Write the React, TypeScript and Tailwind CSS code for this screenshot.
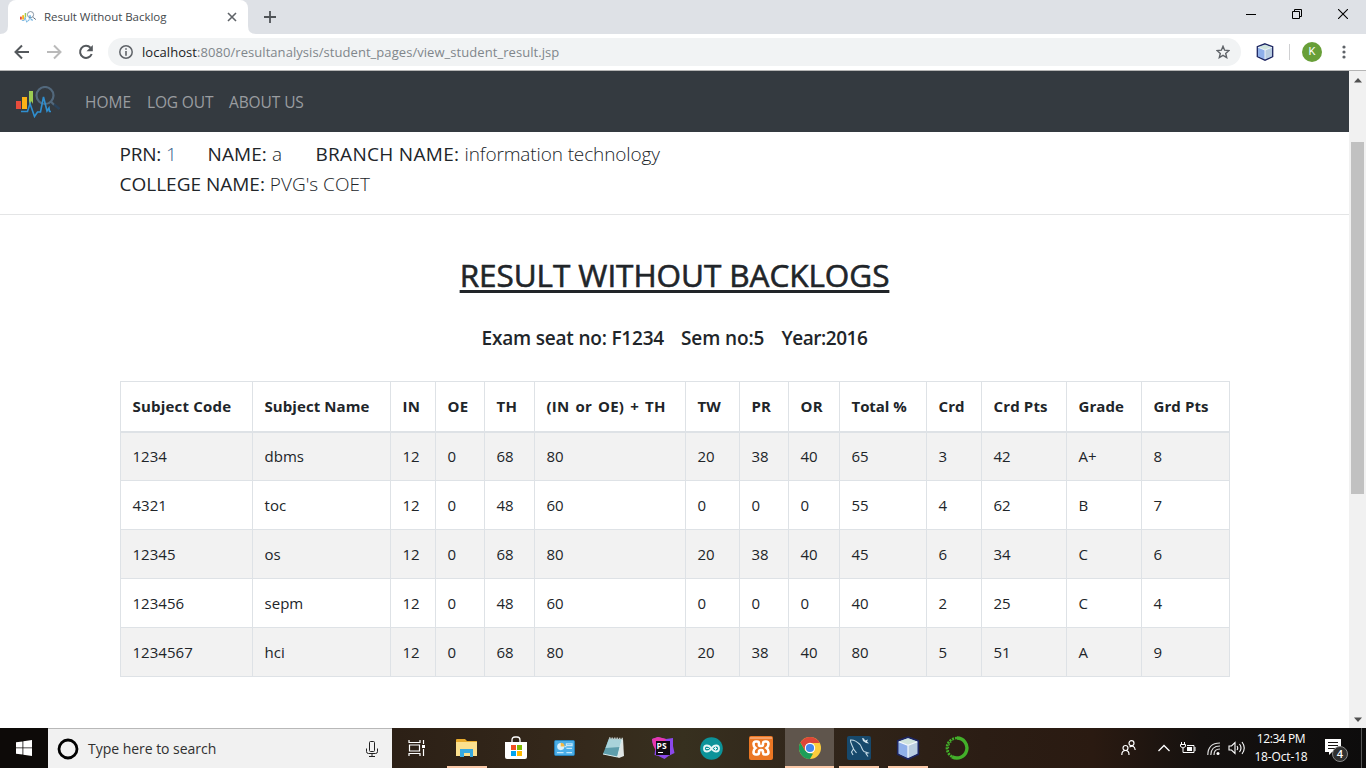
import React from "react";

const SEGOE = "font-['Open_Sans','Noto_Sans',sans-serif]";

const columns: { label: string; w: string; ls: string }[] = [
  { label: "Subject Code", w: "w-[132px]", ls: "tracking-[0.2px]" },
  { label: "Subject Name", w: "w-[138px]", ls: "tracking-[0.08px]" },
  { label: "IN", w: "w-[45px]", ls: "tracking-[0.2px]" },
  { label: "OE", w: "w-[49px]", ls: "tracking-[0.2px]" },
  { label: "TH", w: "w-[50px]", ls: "tracking-[0.2px]" },
  { label: "(IN or OE) + TH", w: "w-[151px]", ls: "tracking-[0.2px] [word-spacing:2px]" },
  { label: "TW", w: "w-[54px]", ls: "tracking-[0.1px]" },
  { label: "PR", w: "w-[49px]", ls: "tracking-[0.2px]" },
  { label: "OR", w: "w-[51px]", ls: "tracking-[0.2px]" },
  { label: "Total %", w: "w-[87px]", ls: "tracking-[-0.05px]" },
  { label: "Crd", w: "w-[55px]", ls: "tracking-[0.1px]" },
  { label: "Crd Pts", w: "w-[85px]", ls: "tracking-[0.15px]" },
  { label: "Grade", w: "w-[75px]", ls: "tracking-[0.05px]" },
  { label: "Grd Pts", w: "w-[88px]", ls: "tracking-[0.1px]" },
];

const rows = [
  ["1234", "dbms", "12", "0", "68", "80", "20", "38", "40", "65", "3", "42", "A+", "8"],
  ["4321", "toc", "12", "0", "48", "60", "0", "0", "0", "55", "4", "62", "B", "7"],
  ["12345", "os", "12", "0", "68", "80", "20", "38", "40", "45", "6", "34", "C", "6"],
  ["123456", "sepm", "12", "0", "48", "60", "0", "0", "0", "40", "2", "25", "C", "4"],
  ["1234567", "hci", "12", "0", "68", "80", "20", "38", "40", "80", "5", "51", "A", "9"],
];

function Logo({ className, ring, handle }: { className: string; ring: string; handle: string }) {
  return (
    <svg className={className} viewBox="0 0 44 32" fill="none">
      <rect x="0" y="15" width="5" height="8" fill="#e74c3c" />
      <rect x="6" y="11" width="5" height="12" fill="#fbb117" />
      <path d="M13 5h4v13l-1.500-3-1.500 5h-1z" fill="#9ccc52" />
      <circle cx="29" cy="9.500" r="8.500" stroke={ring} strokeWidth="2.200" />
      <path d="M34.800 15.500l3.500 3.500" stroke={ring} strokeWidth="2.200" />
      <path d="M38 18.500l5.500 4.500" stroke={handle} strokeWidth="2.500" />
      <path d="M5 25.500h6.500l2.500-8 4.500 13 3-4.500h3l3-15 3.500 14 2-3 .5 3.500h1.500" stroke="#2f8fd0" strokeWidth="1.600" />
    </svg>
  );
}

function Cube({ className }: { className: string }) {
  return (
    <svg className={className} viewBox="0 0 18 18">
      <path d="M9 .8l7.700 2.900v10L9 17.200l-7.700-3.500v-10z" fill="#a9c4ea" stroke="#1d2560" strokeWidth="1.300" />
      <path d="M9 1.700L15.900 4.200 9 6.900 2.100 4.200z" fill="#cfe3dc" />
      <path d="M2.100 4.400L9 7v9.300l-6.900-3.100z" fill="#8fb0ea" />
      <path d="M15.900 4.400L9 7v9.300l6.900-3.100z" fill="#b9cde0" />
      <path d="M9 7v9.200M2.100 4.300L9 7l6.900-2.700" fill="none" stroke="#f4f8fc" strokeWidth=".9" />
    </svg>
  );
}

function TabStrip() {
  return (
    <div className="relative flex h-[34px] shrink-0 bg-[#dee1e6]">
      <svg className="h-[34px] w-2 shrink-0" viewBox="0 0 8 34">
        <path d="M8 26v8H0q8 0 8-8z" fill="#fff" />
      </svg>
      <div className="flex w-[240px] items-center rounded-t-lg bg-white pl-3">
        <Logo className="h-[14px] w-4" ring="#6d7f90" handle="#44586c" />
        <span className="ml-2 w-[175px] whitespace-nowrap text-[11.500px] tracking-[-0.04px] text-[#45494d]">Result Without Backlog</span>
        <svg className="ml-[7px] h-3 w-3 shrink-0" viewBox="0 0 12 12" stroke="#5f6368" strokeWidth="1.600">
          <path d="M2 2l8 8M10 2l-8 8" />
        </svg>
      </div>
      <svg className="h-[34px] w-2 shrink-0" viewBox="0 0 8 34">
        <path d="M0 26v8h8q-8 0-8-8z" fill="#fff" />
      </svg>
      <svg className="ml-2 mt-[11px] h-3 w-3" viewBox="0 0 12 12" stroke="#4f5357" strokeWidth="1.800">
        <path d="M6 0v12M0 6h12" />
      </svg>
      <div className="ml-auto mt-[9px] flex h-[10px] items-center gap-9 pr-[18px]">
        <svg className="h-[10px] w-[10px]" viewBox="0 0 10 10"><path d="M0 5.500h10" stroke="#000" /></svg>
        <svg className="h-[10px] w-[10px]" viewBox="0 0 10 10" fill="none" stroke="#000"><path d="M.5 2.500h7v7h-7zM2.500 2V.5h7v7H8" /></svg>
        <svg className="h-[10px] w-[10px]" viewBox="0 0 10 10" stroke="#000" strokeWidth="1.100"><path d="M0 0l10 10M10 0L0 10" /></svg>
      </div>
    </div>
  );
}

function Toolbar() {
  return (
    <div className="flex h-[37px] shrink-0 items-center border-b border-[#b5b5b5] bg-white">
      <svg className="ml-[14px] h-4 w-4" viewBox="0 0 16 16" fill="none" stroke="#54585c" strokeWidth="2"><path d="M15 8H2.500M8 1.500L1.500 8 8 14.500" /></svg>
      <svg className="ml-4 h-4 w-4" viewBox="0 0 16 16" fill="none" stroke="#bababa" strokeWidth="2"><path d="M1 8h12.500M8 1.500L14.500 8 8 14.500" /></svg>
      <svg className="ml-4 h-4 w-4" viewBox="0 0 16 16" fill="none"><path d="M12.500 3.800A6 6 0 1 0 13.700 10" stroke="#54585c" strokeWidth="2" /><path d="M14.800 1v6.300H8.500z" fill="#54585c" /></svg>
      <div className="ml-[14px] flex h-7 w-[1133px] items-center rounded-full bg-[#f1f3f4] pl-[11px]">
        <svg className="h-[14px] w-[14px]" viewBox="0 0 14 14" fill="none" stroke="#5f6368"><circle cx="7" cy="7" r="6.200" strokeWidth="1.500" /><path d="M7 3.200v1.600M7 6v4.800" strokeWidth="1.600" /></svg>
        <span className="ml-[9px] whitespace-nowrap text-[13px] leading-5 tracking-[0.06px] text-[#80868b]"><span className="text-[#202124]">localhost</span>:8080/resultanalysis/student_pages/view_student_result.jsp</span>
        <svg className="ml-auto mr-[11px] h-[14px] w-[14px]" viewBox="0 0 14 14" fill="none" stroke="#5f6368" strokeWidth="1.400"><path d="M7 1.300l1.600 3.900 4.300.4-3.200 2.800 1 4.200L7 10.400l-3.700 2.200 1-4.200L1.100 5.600l4.300-.4z" /></svg>
      </div>
      <Cube className="ml-[15px] h-[18px] w-[18px]" />
      <div className="ml-[15px] h-4 w-px bg-[#cfd0d2]" />
      <div className="ml-3 flex h-5 w-5 items-center justify-center rounded-full bg-[#689f38] font-['Roboto',sans-serif] text-[11px] text-white">K</div>
      <svg className="ml-5 h-[14px] w-1" viewBox="0 0 4 14" fill="#5f6368"><circle cx="2" cy="2" r="1.600" /><circle cx="2" cy="7" r="1.600" /><circle cx="2" cy="12" r="1.600" /></svg>
    </div>
  );
}

function Page() {
  return (
    <div className="h-full w-[1349px] bg-white text-[#212529]">
      <nav className="flex h-[61px] items-center bg-[#343a40] text-[15.500px] text-[#9a9da0]">
        <Logo className="ml-4 h-8 w-11" ring="#52687c" handle="#2b435b" />
        <div className="ml-[25px] flex gap-4 whitespace-nowrap pt-[3px]">
          <a className="w-[46px] tracking-[0.05px]">HOME</a>
          <a className="w-[66px] tracking-[-0.15px]">LOG OUT</a>
          <a className="tracking-[-0.1px]">ABOUT US</a>
        </div>
      </nav>
      <section className="h-[83px] border-b border-[#e4e5e6] pl-[119.500px] pt-[7px] text-[19px] leading-[30px]">
        <div className="flex whitespace-nowrap">
          <span className="w-[88px] tracking-[-0.2px]">PRN: <span className="font-light text-[#35608a]">1</span></span>
          <span className="w-[108px] tracking-[0.1px]">NAME: <span className="font-light">a</span></span>
          <span className="tracking-[0.3px]">BRANCH NAME: <span className="font-light tracking-[-0.12px]">information technology</span></span>
        </div>
        <div className="whitespace-nowrap">COLLEGE NAME: <span className="font-light">PVG's COET</span></div>
      </section>
      <h2 className="mt-[41px] text-center text-[31.500px] leading-[38px] tracking-[-0.06px] underline decoration-[3px] underline-offset-[3px] [-webkit-text-stroke:0.6px_#212529]">RESULT WITHOUT BACKLOGS</h2>
      <h5 className="mt-8 flex justify-center gap-[17px] whitespace-nowrap text-[19px] font-semibold leading-6 tracking-[-0.2px]">
        <span>Exam seat no: F1234</span><span className="tracking-[-0.1px]">Sem no:5</span><span className="tracking-[-0.45px]">Year:2016</span>
      </h5>
      <table className="ml-[120px] mt-[31px] w-[1110px] table-fixed border-collapse border border-[#dee2e6] text-[15px]">
        <thead>
          <tr className="h-[50px]">
            {columns.map((c) => (
              <th key={c.label} className={`border border-b-2 border-[#dee2e6] pl-[11.500px] text-left font-bold whitespace-nowrap ${c.w} ${c.ls}`}>{c.label}</th>
            ))}
          </tr>
        </thead>
        <tbody>
          {rows.map((r) => (
            <tr key={r[0]} className="h-[49px] odd:bg-[#f2f2f2]">
              {r.map((v, i) => <td key={i} className="border border-[#dee2e6] pl-[11.500px] tracking-[0.03px]">{v}</td>)}
            </tr>
          ))}
        </tbody>
      </table>
    </div>
  );
}

function Scrollbar() {
  return (
    <div className="flex w-[17px] flex-col items-center bg-[#f1f1f1]">
      <svg className="mt-[7px] h-[5px] w-2" viewBox="0 0 8 5"><path d="M4 0l4 4.500H0z" fill="#505050" /></svg>
      <div className="mt-[59px] h-[352px] w-[13px] bg-[#c1c1c1]" />
      <svg className="mb-[6px] mt-auto h-[5px] w-2" viewBox="0 0 8 5"><path d="M0 .5h8L4 5z" fill="#505050" /></svg>
    </div>
  );
}

function TaskItem({ children, active, open }: { children: React.ReactNode; active?: boolean; open?: boolean }) {
  return (
    <div className={`flex h-10 w-[49px] flex-col items-center first-of-type:mr-px ${active ? "bg-[#5f554c]" : ""}`}>
      <div className="flex h-[38px] items-center pt-0.5">{children}</div>
      {(open || active) && <div className={`h-0.5 bg-[#fbc9a8] ${active ? "w-full" : "w-10"}`} />}
    </div>
  );
}

function Taskbar() {
  return (
    <div className="flex h-10 shrink-0 bg-[linear-gradient(90deg,#100c0a_0,#2c2016_29%,#35291b_43%,#37301f_50%,#32271b_58%,#2b1d14_72%,#2a1a11_80%,#15110f_88%,#0d0c0c_100%)] text-white">
      <div className="flex w-12 items-center justify-center bg-[#0d0a08]">
        <svg className="h-4 w-4" viewBox="0 0 16 16" fill="#fff"><path d="M0 2.300L6.500 1.400v6.100H0zM7.300 1.300L16 0v7.500H7.300zM0 8.300h6.500v6.300L0 13.700zM7.300 8.300H16V16l-8.700-1.300z" /></svg>
      </div>
      <div className="flex w-[344px] items-center border-t border-[#b8b8b8] bg-[#f1f1f1] text-[#303030]">
        <svg className="ml-[9px] h-[22px] w-[22px]" viewBox="0 0 22 22"><circle cx="11" cy="11" r="9" fill="none" stroke="#000" strokeWidth="2.800" /></svg>
        <span className="ml-[9px] whitespace-nowrap text-[14px] tracking-[-0.03px]">Type here to search</span>
        <svg className="ml-auto mr-[14px] h-4 w-3" viewBox="0 0 12 16" fill="none" stroke="#222"><rect x="3.500" y=".5" width="5" height="10" rx="1" /><path d="M.5 7.500v3q0 2 2 2h7q2 0 2-2v-3M6 12.500v3M3 15.500h6" /></svg>
      </div>
      <div className="flex">
        <TaskItem>
          <svg className="h-4 w-[18px]" viewBox="0 0 18 16" fill="none" stroke="#fff" strokeWidth="1.200"><path d="M1 0v2.500h11V0M1 16v-2.500h11V16M1.500 5h10v6h-10zM15.500 0v4M15.500 9v7" /><path d="M14 5h3v3h-3z" fill="#fff" stroke="none" /></svg>
        </TaskItem>
        <TaskItem open>
          <svg className="h-5 w-6" viewBox="0 0 24 20"><path d="M1 2q0-1 1-1h8l2 2h10v15H1z" fill="#e8ab2d" /><path d="M1 4h21v14H1z" fill="#fbe08e" /><path d="M5 19v-8h13v8h-3v-4H9v4z" fill="#37a9df" /></svg>
        </TaskItem>
        <TaskItem>
          <svg className="h-6 w-6" viewBox="0 0 24 24"><path d="M8 8V4q0-3 3-3h2q3 0 3 3v4" fill="none" stroke="#fff" strokeWidth="1.300" /><path d="M1 6h22v15q0 2-2 2H3q-2 0-2-2z" fill="#fff" /><path d="M7 9h5v5H7z" fill="#f25022" /><path d="M13 9h5v5h-5z" fill="#7fba00" /><path d="M7 15h5v5H7z" fill="#00a4ef" /><path d="M13 15h5v5h-5z" fill="#ffb900" /></svg>
        </TaskItem>
        <TaskItem>
          <svg className="h-4 w-[21px]" viewBox="0 0 22 17"><rect x=".5" y=".5" width="21" height="16" rx="1" fill="#4aaee8" stroke="#2583bd" /><circle cx="7" cy="7" r="3.800" fill="#d9f0fb" /><path d="M7 7V3a4 4 0 0 1 4 4z" fill="#f5b942" /><path d="M11 7h2M13 4h6v2h-6zM13 9h6M3 13.500h7M13 13.500h6" fill="none" stroke="#c4e6f8" strokeWidth="1.300" /></svg>
        </TaskItem>
        <TaskItem>
          <svg className="h-[22px] w-6" viewBox="0 0 24 22"><path d="M18 2h3l1 17-5 2-6-3z" fill="#dfe5e4" /><path d="M7 1.500l13 .5-4.500 18L1 17z" fill="#5d9dab" /><path d="M7 1.500l13 .5-2 8-14.500 1z" fill="#a9d3da" /><path d="M1 17l14.500 3L20 2" fill="none" stroke="#dbeef0" /><path d="M7 1.300l14 .5" stroke="#bac0bd" strokeWidth="2" strokeDasharray="1.500 1" /></svg>
        </TaskItem>
        <TaskItem>
          <svg className="h-6 w-6" viewBox="0 0 24 24"><path d="M1 3l6-2 8 2 7-1v8l1.500 7-6 3-4 3-6-3-4-1 1-8-3-4z" fill="#8b48ec" /><path d="M1 3l6-2 8 2-3 9-7 3-3-6z" fill="#e736ad" /><path d="M5 5h14v14H5z" fill="#100b13" /><text x="5.600" y="12.500" fill="#fff" fontSize="8.500" fontWeight="700" fontFamily="Open Sans">PS</text><path d="M7 16.500h5" stroke="#fff" /></svg>
        </TaskItem>
        <TaskItem>
          <svg className="h-[23px] w-[23px]" viewBox="0 0 23 23" fill="none"><circle cx="11.500" cy="11.500" r="11.300" fill="#0c9399" /><path d="M11.500 11.500C9 7.500 4 7.500 4 11.500s5 4 7.500 0 7.500-4 7.500 0-5 4-7.500 0z" stroke="#e4f5f5" strokeWidth="1.800" /><path d="M6 11.500h3M14 11.500h3M15.500 10v3" stroke="#e4f5f5" /></svg>
        </TaskItem>
        <TaskItem>
          <svg className="h-6 w-6" viewBox="0 0 24 24" fill="none"><rect width="24" height="24" rx="2" fill="#eb7724" /><path d="M1 1h22v2H1z" fill="#f3a069" /><path d="M10 9.300V7.500Q10 5.500 8 5.500H7Q4.500 5.500 4.500 8t2 4q-2 1.500-2 4T7 18.500h1q2 0 2-2v-1q0-1.500 2-1.500t2 1.500v1q0 2 2 2h1q2.500 0 2.500-2.500t-2-4q2-1.500 2-4T17 5.500h-1q-2 0-2 2v1.300q0 1.200-2 1.200t-2-.7z" stroke="#fff" strokeWidth="2.600" /></svg>
        </TaskItem>
        <TaskItem active>
          <svg className="h-[22px] w-[22px]" viewBox="0 0 22 22"><circle cx="11" cy="11" r="11" fill="#fccd3d" /><path d="M11 22A11 11 0 0 1 1.470 5.500L6.200 13.800 11 16l3 .8z" fill="#1c9e59" /><path d="M1.470 5.500A11 11 0 0 1 20.500 5.500V6H11l-4.800 7.800z" fill="#dc4638" /><circle cx="11" cy="11" r="5.200" fill="#fff" /><circle cx="11" cy="11" r="4.100" fill="#4387ee" /></svg>
        </TaskItem>
        <TaskItem open>
          <svg className="h-6 w-6" viewBox="0 0 24 24" fill="none"><rect width="24" height="24" rx="2" fill="#17496c" /><path d="M6 19l-1.500-3 2-3C5.500 9.500 3 7 3.500 4c4-.5 7 2 9.500 4.500 2 2.500 1.500 5 4 7l4 1.500-2 .5 2 3M6.500 13l3 4" stroke="#c3d9e4" strokeWidth="1.100" /><path d="M15 2l2 .5 1 2 3-1-1 2 2 2-3-.5-3-2z" fill="#d4e5ed" /></svg>
        </TaskItem>
        <TaskItem open><Cube className="h-6 w-6" /></TaskItem>
        <TaskItem>
          <svg className="h-6 w-6" viewBox="0 0 24 24" fill="none" stroke="#43b02a"><path d="M12 2a10 10 0 1 1-5 18.700" strokeWidth="3.400" /><path d="M7 20.700A10 10 0 0 1 12 2" strokeWidth="2.600" strokeDasharray="2 1" /><path d="M4.500 18A11 11 0 0 1 8 4" strokeWidth="1.400" strokeDasharray="1.200 1.800" /></svg>
        </TaskItem>
      </div>
      <div className="ml-auto flex items-center">
        <svg className="h-4 w-[15px]" viewBox="0 0 15 16" fill="none" stroke="#fff" strokeWidth="1.200"><circle cx="4.500" cy="8" r="2.500" /><path d="M.8 15q0-4.500 3.700-4.500T8 15" /><circle cx="10.500" cy="3.200" r="2.500" /><path d="M8.500 7q5-2.500 5.700 3" /></svg>
        <svg className="ml-[22px] h-2 w-3" viewBox="0 0 12 8" fill="none" stroke="#fff" strokeWidth="1.300"><path d="M.5 7L6 1.500 11.500 7" /></svg>
        <svg className="ml-[10px] h-3 w-4" viewBox="0 0 16 12" fill="none" stroke="#fff"><path d="M.5 2.500h5v2q-2.500 3-5 0zM1.500 0v2M4.500 0v2M3 6v4.500h11v-7H7M15 5v4" /><path d="M7 5h5v4H7z" fill="#fff" stroke="none" /></svg>
        <svg className="ml-[11px] h-[13px] w-[13px]" viewBox="0 0 13 13" fill="none" stroke="#ddd" strokeWidth="1.200"><path d="M.8 13Q1 1 13 1M3.800 13Q4 4 13 4M7 13q0-6 6-6" /><circle cx="11" cy="11.500" r="1.500" fill="#fff" stroke="none" /></svg>
        <svg className="ml-2 h-[14px] w-[17px]" viewBox="0 0 17 14" fill="none" stroke="#fff" strokeWidth="1.100"><path d="M1 5h2.500L7 1.500v11L3.500 9H1zM9 5q1.500 2 0 4M11.500 3q3 4 0 8M14 1q4.500 6 0 12" /></svg>
        <div className="ml-[7px] w-[58px] whitespace-nowrap text-center text-[12px] leading-[18px] tracking-[-0.4px]"><div>12:34 PM</div><div className="tracking-[-0.15px]">18-Oct-18</div></div>
        <div className="relative ml-[15px] h-6 w-6">
          <svg className="h-6 w-6" viewBox="0 0 24 24"><path d="M0 3h16v13H7l-3 3v-3H0z" fill="#fff" /><path d="M3 6.500h10M3 9.500h10M3 12.500h7" stroke="#181412" /></svg>
          <div className="absolute left-[7px] top-[10px] flex h-4 w-4 items-center justify-center rounded-full border border-[#888] bg-[#30302f] text-[11px] font-semibold">4</div>
        </div>
        <div className="ml-3 h-10 w-px bg-[#555]" />
        <div className="w-1" />
      </div>
    </div>
  );
}

export default function App() {
  return (
    <div className={`flex h-[768px] w-[1366px] flex-col overflow-hidden ${SEGOE}`}>
      <TabStrip />
      <Toolbar />
      <div className="flex min-h-0 flex-1"><Page /><Scrollbar /></div>
      <Taskbar />
    </div>
  );
}
